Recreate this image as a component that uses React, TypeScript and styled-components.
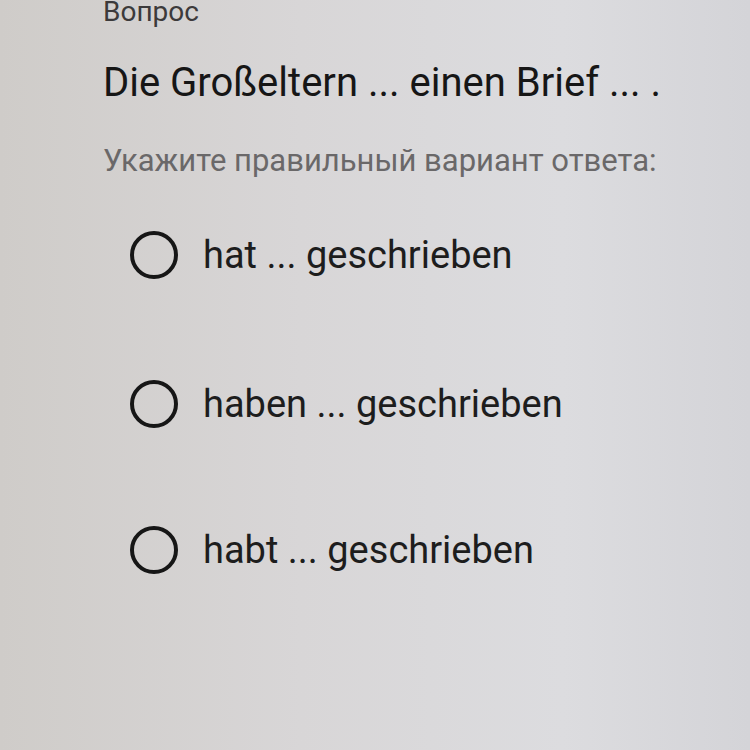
import React from 'react';
import styled, {createGlobalStyle} from 'styled-components';

const GlobalStyle = createGlobalStyle`
  html, body {
    margin: 0;
    padding: 0;
    height: 100%;
  }
  body {
    background: linear-gradient(90deg, #cfccc9 0%, #d8d6d7 40%, #dcdcdf 75%, #d4d4d8 100%);
    font-family: Roboto, "Noto Sans", sans-serif;
  }
`;

const options = ["hat ... geschrieben", "haben ... geschrieben", "habt ... geschrieben"];

const App = () => {
    return (
        <>
            <GlobalStyle/>
            <QuestionBlock>
                <Label>Вопрос</Label>
                <Title>Die Großeltern ... einen Brief ... .</Title>
                <Hint>Укажите правильный вариант ответа:</Hint>
                <OptionList>
                    {options.map((text) => (
                        <Option key={text}>
                            <Radio/>
                            <span className={"text"}>{text}</span>
                        </Option>
                    ))}
                </OptionList>
            </QuestionBlock>
        </>
    );
};

const QuestionBlock = styled.div`
  display: flex;
  flex-direction: column;
  padding: 0 0 0 103px;
  height: 750px;
  box-sizing: border-box;
  overflow: hidden;
`;

const Label = styled.div`
  font-size: 28px;
  line-height: 32px;
  margin-top: -4px;
  color: #3c3a3b;
`;

const Title = styled.div`
  font-size: 40px;
  line-height: 48px;
  margin-top: 31px;
  color: #161616;
  white-space: nowrap;
`;

const Hint = styled.div`
  font-size: 31px;
  line-height: 36px;
  margin-top: 36px;
  color: #6a6869;
  white-space: nowrap;
`;

const OptionList = styled.div`
  display: flex;
  flex-direction: column;
  gap: 98px;
  margin-top: 52px;
  padding-left: 27px;
`;

const Option = styled.div`
  display: flex;
  align-items: center;
  gap: 25px;
  height: 48px;
  span.text {
    font-size: 38px;
    color: #1d1d1d;
    white-space: nowrap;
  }
  &:nth-child(2) {
    margin-top: 3px;
  }
`;

const Radio = styled.div`
  width: 40px;
  height: 40px;
  border: 4px solid #161616;
  border-radius: 50%;
  flex-shrink: 0;
`;

export default App;
